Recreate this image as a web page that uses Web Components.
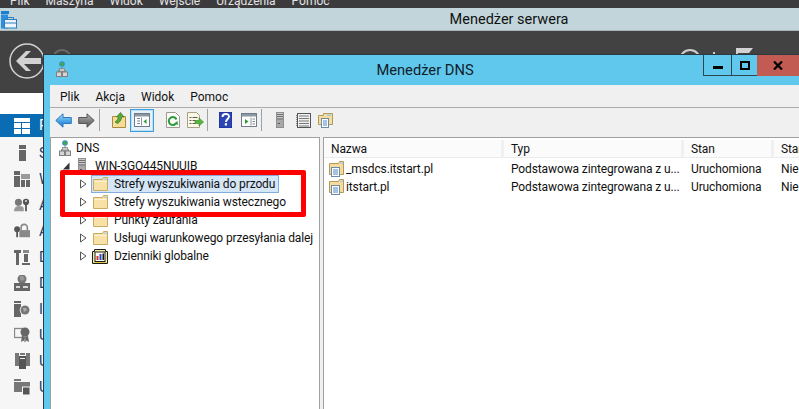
<!DOCTYPE html>
<html lang="pl">
<head>
<meta charset="utf-8">
<title>Menedżer DNS</title>
<style>
html, body { margin: 0; height: 100%; overflow: hidden; background: #f6f6f6; }
body { font-family: Roboto, "Noto Sans", "Liberation Sans", sans-serif; }
</style>
</head>
<body>
<srv-desktop>
  <dns-window></dns-window>
</srv-desktop>

<script>
// rysunki ikon (16x16 chyba że podano inaczej)
const ICONS = {
    back: `<svg width="17" height="15" viewBox="0 0 17 15"><defs><linearGradient id="bk" x1="0" y1="0" x2="0" y2="1"><stop offset="0" stop-color="#a9dcf8"/><stop offset=".55" stop-color="#45a3e6"/><stop offset="1" stop-color="#1f74c4"/></linearGradient></defs><path d="M.8 7.500 8 .8v3.700h8.300v6H8v3.700z" fill="url(#bk)" stroke="#2a78c0"/></svg>`,
    forward: `<svg width="17" height="15" viewBox="0 0 17 15"><defs><linearGradient id="fw" x1="0" y1="0" x2="0" y2="1"><stop offset="0" stop-color="#b5b5b5"/><stop offset=".55" stop-color="#7d7d7d"/><stop offset="1" stop-color="#5a5a5a"/></linearGradient></defs><path d="M16.200 7.500 9 .8v3.700H.7v6H9v3.700z" fill="url(#fw)" stroke="#555"/></svg>`,
    folderUp: `<svg width="16" height="16" viewBox="0 0 16 16"><path d="M1.500 4.500h13v11h-13z" fill="#f6dc94" stroke="#a98a3e"/><path d="M2 14 9 7" stroke="#f9edc6" stroke-width="1"/><path d="M4 10c2-1 3-3 3.500-5L5.500 5 9.500.5 13 5l-2.500 0c0 3-1.500 5-4 6.500z" fill="#5ba83a" stroke="#2f7a22" stroke-width=".7"/></svg>`,
    treePane: `<svg width="16" height="14" viewBox="0 0 16 14"><rect x=".5" y=".5" width="15" height="13" fill="#fff" stroke="#6f7b88"/><rect x="1" y="1" width="14" height="2.500" fill="#8c97a3"/><path d="M3 5h3v1H3zM3 7.500h3v1H3zM3 10h3v1H3z" fill="#7b8794"/><path d="M7.500 4.500v8" stroke="#8c97a3"/><path d="M12.500 6v5l-3-2.500z" fill="#2f9a3a"/></svg>`,
    refresh: `<svg width="14" height="16" viewBox="0 0 14 16"><path d="M.5.500h9l4 4v11H.5z" fill="#fbfbf8" stroke="#9a9a92"/><path d="M10.500 7.500a4 4 0 1 0-.8 4.300" fill="none" stroke="#2e9c3c" stroke-width="2"/><path d="M8 11.500l3.500-2.500.5 4z" fill="#2e9c3c"/></svg>`,
    exportList: `<svg width="17" height="16" viewBox="0 0 17 16"><path d="M.5.500h9l3 3v12H.5z" fill="#fcf8e6" stroke="#a8a184"/><path d="M2.500 5h2v1h-2zM5.500 5h5v1h-5zM2.500 8h2v1h-2zM5.500 8h3v1h-3zM2.500 11h2v1h-2zM5.500 11h3v1h-3z" fill="#5c5c5c"/><path d="M8 8.500h4V6l4.500 4-4.500 4v-2.500H8z" fill="#58b53c" stroke="#338a23" stroke-width=".6"/></svg>`,
    help: `<svg width="13" height="16" viewBox="0 0 13 16"><rect width="13" height="16" fill="#2b45b4"/><rect x="0" y="0" width="13" height="16" fill="none" stroke="#1b2c88"/><path d="M3.500 5c0-4 6.500-4 6.500-.5 0 2.500-3 2.500-3 5.500" fill="none" stroke="#fff" stroke-width="1.900"/><rect x="5.800" y="11.200" width="2.200" height="2.300" fill="#fff"/></svg>`,
    consolePane: `<svg width="16" height="14" viewBox="0 0 16 14"><rect x=".5" y=".5" width="15" height="13" fill="#fff" stroke="#6f7b88"/><rect x="1" y="1" width="14" height="2.500" fill="#8c97a3"/><path d="M10 4.500v8" stroke="#8c97a3"/><path d="M11.500 5.500h2.500v1h-2.500zM11.500 8h2.500v1h-2.500zM11.500 10.500h2.500v1h-2.500z" fill="#7b8794"/><path d="M4 6v5l3.500-2.500z" fill="#2f9a3a"/></svg>`,
    server: `<svg width="8" height="16" viewBox="0 0 8 16"><rect width="8" height="16" fill="#8f8f8f"/><rect x="1" y="1" width="6" height="5" fill="#c8c8c8"/><path d="M1 2.500h6M1 4.500h6" stroke="#707070"/><rect x="1" y="8" width="6" height="7" fill="#a9a9a9"/><rect x="2" y="11" width="2" height="1" fill="#555"/></svg>`,
    notes: `<svg width="15" height="15" viewBox="0 0 15 15"><rect x="1.500" y=".5" width="13" height="14" fill="#f1f1f1" stroke="#555"/><path d="M3 3h10M3 5.500h10M3 8h10M3 10.500h10M3 13h10" stroke="#777"/><path d="M.5 2v11" stroke="#888" stroke-dasharray="1 1"/></svg>`,
    folderDoc: `<svg width="15" height="16" viewBox="0 0 15 16"><path d="M.5 3.500h5V1.500h9v11H.5z" fill="#f6dd9c" stroke="#b19a5e"/><rect x="9" y="2.500" width="4" height="1.500" fill="#9ccbe9"/><rect x="3.500" y="6.500" width="7" height="9" fill="#fbfdff" stroke="#6d8aa8"/><path d="M5 9h4M5 11h4M5 13h4" stroke="#4e88c4"/></svg>`,
    dns: `<svg width="12" height="16" viewBox="0 0 12 16"><circle cx="6" cy="3" r="2.800" fill="#2f8fd0"/><path d="M4 1.500h3l1 2-2 2-1.500-1.500z" fill="#45ab3f"/><path d="M6 6v3M2.500 11V9.500h7V11" stroke="#7d7d7d" fill="none"/><rect x="3.500" y="7.500" width="5" height="3" fill="#c9c9c9" stroke="#808080" stroke-width=".7"/><rect x=".5" y="11" width="5" height="4.500" fill="#d6d6d6" stroke="#808080"/><rect x="6.500" y="11" width="5" height="4.500" fill="#d6d6d6" stroke="#808080"/></svg>`,
    folder: `<svg width="15" height="14" viewBox="0 0 15 14"><path d="M.5 2.500h9l1-2h4v13H.5z" fill="#f7e1a6" stroke="#c9ab62"/><path d="M11 1.500h3V3h-3z" fill="#a9d3ec"/><path d="M1.500 4.500h12" stroke="#fcf3d6"/></svg>`,
    logs: `<svg width="16" height="15" viewBox="0 0 16 15"><path d="M.5 2.500h2V.5h11v2h2v12H.5z" fill="#f2eda0" stroke="#1c1c1c"/><rect x="3" y="3" width="10" height="9.500" fill="#fff" stroke="#1c1c1c"/><rect x="4.500" y="7" width="2" height="4" fill="#e0342c"/><rect x="7.500" y="5" width="2" height="6" fill="#2c4fc8"/><rect x="10.500" y="4.500" width="1.500" height="6.500" fill="#1b1b1b"/><path d="M1.500 13.500h13" stroke="#e0c93a"/></svg>`,
    zone: `<svg width="15" height="16" viewBox="0 0 15 16"><path d="M.5 2.500h9l1-2h4v13H.5z" fill="#f5dc9e" stroke="#b7985a"/><path d="M11 1.500h3V3h-3z" fill="#a9d3ec"/><rect x="2.500" y="6.500" width="8" height="9" fill="#fbfdff" stroke="#6d8aa8"/><path d="M4 9h5M4 11h5M4 13h5" stroke="#4e88c4"/></svg>`,
    appBox: `<svg width="16" height="18" viewBox="0 0 16 18"><rect x="0" y="0" width="8" height="3" fill="#1a7fd0"/><rect x="0" y="3.500" width="7" height="14" fill="#2d8fdc"/><rect x="3.500" y="8.500" width="12" height="8.500" fill="#eef6fb" stroke="#2a7cc0"/><path d="M6.500 8.500V6.500h6v2" fill="none" stroke="#2a7cc0"/><path d="M4 12h11" stroke="#2a7cc0"/></svg>`,
    dash: `<svg width="16" height="16" viewBox="0 0 16 16" fill="#fff"><rect width="16" height="4"/><rect y="5" width="7" height="5"/><rect x="8" y="5" width="8" height="5"/><rect y="11" width="7" height="5"/><rect x="8" y="11" width="8" height="5"/></svg>`,
    sLocal: `<svg width="16" height="16" viewBox="0 0 16 16" fill="#666"><rect x="5" y="0" width="7" height="4"/><rect x="5" y="5" width="7" height="11"/></svg>`,
    sAll: `<svg width="16" height="16" viewBox="0 0 16 16" fill="#666"><rect x="0" y="0" width="6" height="4"/><rect x="0" y="5" width="6" height="11"/><rect x="7" y="3" width="9" height="5" fill="#999"/><rect x="7" y="9" width="4" height="7"/><rect x="12" y="9" width="4" height="7"/></svg>`,
    sCert: `<svg width="18" height="16" viewBox="0 0 18 16" fill="#777"><circle cx="5" cy="5" r="4"/><path d="M0 15c0-5 3-6 6-6s5 1 5 3v3z" fill="#999"/><circle cx="13.500" cy="4.500" r="3.500" fill="#555"/><circle cx="13.500" cy="3.500" r="1" fill="#f6f6f6"/><rect x="12.500" y="7" width="2" height="8" fill="#555"/></svg>`,
    sLock: `<svg width="18" height="16" viewBox="0 0 18 16"><circle cx="3.500" cy="6" r="3.300" fill="#555"/><rect x="2.500" y="8" width="2" height="7" fill="#555"/><path d="M8 7V4a3.500 3.500 0 0 1 7 0v3" fill="none" stroke="#888" stroke-width="1.800"/><rect x="6" y="7" width="12" height="8" fill="#888"/></svg>`,
    sTools: `<svg width="16" height="16" viewBox="0 0 16 16" fill="#666"><path d="M0 1h7v3H5v12H2V4H0z"/><rect x="9" y="1" width="6" height="3" fill="#888"/><rect x="10" y="5" width="4" height="8"/><rect x="8" y="14" width="8" height="2"/></svg>`,
    sGlobeNet: `<svg width="16" height="16" viewBox="0 0 16 16" fill="#666"><circle cx="8" cy="4" r="4.500" fill="#777"/><path d="M6 1h3l2 3-3 2-2-2z" fill="#999"/><rect y="8" width="16" height="8"/><path d="M2 12h4M9 12h5" stroke="#d8d8d8" stroke-width="2"/></svg>`,
    sPcGlobe: `<svg width="16" height="16" viewBox="0 0 16 16" fill="#666"><rect width="7" height="2"/><rect y="3" width="7" height="13"/><circle cx="11" cy="9" r="5.300" fill="#f6f6f6"/><circle cx="11" cy="9" r="4.500" fill="#777"/><path d="M9 7h3l1 2-3 2z" fill="#aaa"/></svg>`,
    sAward: `<svg width="16" height="16" viewBox="0 0 16 16" fill="#666"><rect x=".5" y="1.500" width="8" height="9" fill="#f6f6f6" stroke="#888" stroke-width="1.300"/><circle cx="11" cy="5" r="4.500"/><path d="M8 9l-1 6 2.500-1.500 1 2 .5-6zM14 9l1 6-2.500-1.500-1 2-.5-6z"/></svg>`,
    sTower: `<svg width="15" height="16" viewBox="0 0 15 16" fill="#777"><rect width="4" height="13"/><rect x="11" width="4" height="13"/><rect x="5" y="0" width="5" height="2"/><rect x="4" y="3" width="7" height="13" fill="#555"/><rect x="5" y="5" width="5" height="1" fill="#eee"/></svg>`,
    sFiles: `<svg width="16" height="16" viewBox="0 0 16 16" fill="#777"><rect width="7" height="2"/><rect y="3" width="11" height="10"/><rect x="10" y="3" width="6" height="7"/><rect x="8.500" y="8" width="7.500" height="8" fill="#555" stroke="#f6f6f6"/></svg>`
};

// pasek menu maszyny wirtualnej + pasek tytułu + ciemny pasek nawigacji
customElements.define('srv-desktop', class extends HTMLElement {
    constructor() {
        super();
        this.attachShadow({ mode: 'open' });
        this.render();
    }
    render() {
        this.shadowRoot.innerHTML = `
        <style>
        :host { display: flex; flex-direction: column; width: 799px; height: 409px; position: relative; overflow: hidden; }
        .vm { height: 8px; background: #3b3b3d; display: flex; align-items: flex-end; padding-left: 10px; gap: 16px; overflow: hidden; flex: none; }
        .vm span { color: #e4e4e4; font-size: 12px; line-height: 18px; flex: none; margin-bottom: -2px; }
        .caption { height: 23px; box-sizing: border-box; background: #c1d5db; color: #111; display: flex; align-items: center; justify-content: center; font-size: 14.500px; border-bottom: 1px solid #a9b4b8; position: relative; padding-left: 219px; flex: none; }
        .caption svg { position: absolute; left: 1px; top: 3px; }
        .nav { height: 62px; background: #424242; position: relative; flex: none; overflow: hidden; }
        .back { position: absolute; left: 9px; top: 11px; }
        .next { position: absolute; left: 52px; top: 18px; width: 16px; height: 16px; border: 2px solid #6a6a6a; border-radius: 50%; }
        .refresh { position: absolute; left: 679px; top: 18px; width: 18px; height: 18px; border: 2px solid #cfcfcf; border-radius: 50%; }
        .dot { position: absolute; left: 713px; top: 21px; width: 2px; height: 2px; background: #cfcfcf; }
        .flag { position: absolute; left: 736px; top: 17px; }
        .gap { height: 21px; background: #fff; flex: none; }
        </style>
        <div class="vm"><span>Plik</span><span>Maszyna</span><span>Widok</span><span>Wejście</span><span>Urządzenia</span><span>Pomoc</span></div>
        <div class="caption">${ICONS.appBox}Menedżer serwera</div>
        <div class="nav">
            <svg class="back" width="38" height="38" viewBox="0 0 38 38"><circle cx="18" cy="19" r="17" fill="none" stroke="#d2d2d2" stroke-width="1.500"/><path d="M7 19 17 9h5l-7 7h17v6H15l7 7h-5z" fill="#d2d2d2"/></svg>
            <div class="next"></div><div class="refresh"></div><div class="dot"></div>
            <svg class="flag" width="18" height="10" viewBox="0 0 18 10"><path d="M0 0h2v10H0zM2 0h15l-4 5H2z" fill="#d2d2d2"/></svg>
        </div>
        <div class="gap"></div>
        <srv-sidebar></srv-sidebar>
        <slot></slot>`;
    }
});

// lewa kolumna Menedżera serwera, przykryta oknem DNS
customElements.define('srv-sidebar', class extends HTMLElement {
    constructor() {
        super();
        this.attachShadow({ mode: 'open' });
        const rows = [
            ['sLocal', 'Serwer lokalny'], ['sAll', 'Wszystkie serwery'], ['sCert', 'AD CS'],
            ['sLock', 'AD DS'], ['sTools', 'DHCP'], ['sGlobeNet', 'DNS'], ['sPcGlobe', 'IIS'],
            ['sAward', 'Usługi certyfikatów'], ['sTower', 'Usługi pulpitu'], ['sFiles', 'Usługi plików']
        ];
        this.shadowRoot.innerHTML = `
        <style>
        :host { display: block; flex: 1; width: 43px; overflow: hidden; background: #f6f6f6; font-size: 14.500px; color: #1f3f66; }
        .row { display: flex; align-items: center; height: 26px; padding-left: 14px; gap: 9px; white-space: nowrap; }
        .ic { width: 16px; display: flex; justify-content: center; flex: none; }
        .active { height: 23px; background: #0a6db4; color: #fff; margin-bottom: 3px; }
        </style>
        <div class="row active"><span class="ic">${ICONS.dash}</span><span>Pulpit nawigacyjny</span></div>
        ${rows.map(([ic, label]) => `<div class="row"><span class="ic">${ICONS[ic]}</span><span>${label}</span></div>`).join('')}`;
    }
});

customElements.define('dns-window', class extends HTMLElement {
    constructor() {
        super();
        this.attachShadow({ mode: 'open' });
        this.shadowRoot.innerHTML = `
        <style>
        :host { position: absolute; left: 43px; top: 54px; right: 0; bottom: 0; display: flex; flex-direction: column; background: #60c8ec; border: 1px solid #2b3a42; border-width: 1px 0 0 1px; font-size: 12px; letter-spacing: -.12px; color: #111; }
        .title { height: 30px; display: flex; align-items: center; justify-content: center; font-size: 14.700px; letter-spacing: 0; position: relative; flex: none; padding-left: 7px; color: #10202a; }
        .title > svg { position: absolute; left: 12px; top: 6px; }
        .btns { position: absolute; right: 0; top: 0; display: flex; height: 21px; }
        .btns div { display: flex; align-items: center; justify-content: center; box-sizing: border-box; border: 1px solid #2d4651; border-width: 0 0 1px 1px; }
        .min { width: 28px; } .max { width: 26px; }
        .close { width: 42px; background: #c25b52; border: 0 !important; }
        .body { flex: 1; margin-left: 6px; background: #f0f0f0; display: flex; flex-direction: column; min-height: 0; }
        .panes { flex: 1; display: flex; gap: 3px; min-height: 0; }
        </style>
        <div class="title">
            ${ICONS.dns}<span>Menedżer DNS</span>
            <div class="btns">
                <div class="min"><svg width="10" height="10" viewBox="0 0 10 10"><rect y="6" width="10" height="3" fill="#000"/></svg></div>
                <div class="max"><svg width="10" height="9" viewBox="0 0 10 9"><rect x="1" y="1" width="8" height="7" fill="none" stroke="#000" stroke-width="2"/></svg></div>
                <div class="close"><svg width="10" height="9" viewBox="0 0 10 9"><path d="M1 .5 9 8.500M9 .5 1 8.500" stroke="#000" stroke-width="2.200"/></svg></div>
            </div>
        </div>
        <div class="body">
            <dns-menu></dns-menu>
            <dns-toolbar></dns-toolbar>
            <div class="panes"><dns-tree></dns-tree><dns-list></dns-list></div>
        </div>`;
    }
});

customElements.define('dns-menu', class extends HTMLElement {
    constructor() {
        super();
        this.attachShadow({ mode: 'open' });
        this.shadowRoot.innerHTML = `
        <style>
        :host { display: flex; height: 21px; padding-top: 1px; align-items: center; padding-left: 10px; gap: 16px; border-bottom: 1px solid #ababab; flex: none; letter-spacing: 0; }
        </style>
        <span>Plik</span><span>Akcja</span><span>Widok</span><span>Pomoc</span>`;
    }
});

customElements.define('dns-toolbar', class extends HTMLElement {
    constructor() {
        super();
        this.attachShadow({ mode: 'open' });
        // [ikona, margines z lewej]
        const items = [
            ['back', 5], ['forward', 6], ['|', 4], ['folderUp', 11], ['*treePane', 3], ['refresh', 12],
            ['exportList', 7], ['|', 3], ['help', 11], ['consolePane', 9], ['|', 4], ['server', 14],
            ['notes', 12], ['folderDoc', 7]
        ];
        const html = items.map(([name, ml]) => {
            if (name === '|') return `<i class="sep" style="margin-left:${ml}px"></i>`;
            if (name[0] === '*') return `<b class="on" style="margin-left:${ml}px">${ICONS[name.slice(1)]}</b>`;
            return `<b style="margin-left:${ml}px">${ICONS[name]}</b>`;
        }).join('');
        this.shadowRoot.innerHTML = `
        <style>
        :host { display: flex; height: 29px; padding-bottom: 5px; align-items: center; flex: none; box-sizing: border-box; }
        b { display: flex; align-items: center; justify-content: center; font-weight: normal; }
        .on { width: 22px; height: 21px; border: 1px solid #3a9ddc; background: #e6f2fa; box-shadow: inset 0 0 0 1px #bfe0f5; }
        .sep { width: 1px; height: 22px; background: #a0a0a0; }
        </style>
        ${html}`;
    }
});

customElements.define('dns-tree', class extends HTMLElement {
    constructor() {
        super();
        this.attachShadow({ mode: 'open' });
        this.shadowRoot.innerHTML = `
        <style>
        :host { display: block; width: 270px; flex: none; background: #fff; border: 1px solid #a0a0a0; border-bottom: 0; box-sizing: border-box; position: relative; padding-top: 1px; overflow: hidden; }
        .mark { position: absolute; left: 9px; top: 32px; width: 236px; height: 37px; border: 5px solid #f00; border-radius: 2px; }
        </style>
        <tree-row level="0" icon="dns" text="DNS"></tree-row>
        <tree-row level="1" icon="server" twist="open" text="WIN-3GO445NUUIB"></tree-row>
        <tree-row level="2" icon="folder" twist="closed" selected text="Strefy wyszukiwania do przodu"></tree-row>
        <tree-row level="2" icon="folder" twist="closed" text="Strefy wyszukiwania wstecznego"></tree-row>
        <tree-row level="2" icon="folder" twist="closed" text="Punkty zaufania"></tree-row>
        <tree-row level="2" icon="folder" twist="closed" text="Usługi warunkowego przesyłania dalej"></tree-row>
        <tree-row level="2" icon="logs" twist="closed" text="Dzienniki globalne"></tree-row>
        <div class="mark"></div>`;
    }
});

customElements.define('tree-row', class extends HTMLElement {
    constructor() {
        super();
        this.attachShadow({ mode: 'open' });
    }
    connectedCallback() {
        const level = +this.getAttribute('level');
        const twist = this.getAttribute('twist');
        const sel = this.hasAttribute('selected');
        // wcięcia odczytane z obrazka: [lewy, strzałka, przed tekstem]
        const [pad, tw, gap] = [[6, 0, 1], [12, 11, 3], [29, 12, 4]][level];
        let arrow = '';
        if (twist === 'closed') arrow = `<svg width="7" height="10" viewBox="0 0 7 10"><path d="M.5 1 6 5 .5 9z" fill="#fff" stroke="#555"/></svg>`;
        if (twist === 'open') arrow = `<svg width="7" height="10" viewBox="0 0 7 10"><path d="M6.500 1.500v7H0z" fill="#333"/></svg>`;
        this.shadowRoot.innerHTML = `
        <style>
        :host { display: flex; height: 18px; align-items: center; white-space: nowrap; padding-left: ${pad}px; }
        .tw { width: ${tw}px; flex: none; display: flex; }
        .ic { width: 16px; display: flex; justify-content: center; flex: none; }
        .txt { margin-left: ${gap}px; line-height: 15px; padding: 0 3px 0 2px; }
        .lab { display: flex; align-items: center; height: 18px; box-sizing: border-box; }
        .sel { background: #d5e6f7; border: 1px solid #85abd8; margin-left: -1px; }
        </style>
        <span class="tw">${arrow}</span>
        <span class="lab ${sel ? 'sel' : ''}"><span class="ic">${ICONS[this.getAttribute('icon')]}</span><span class="txt">${this.getAttribute('text')}</span></span>`;
    }
});

customElements.define('dns-list', class extends HTMLElement {
    constructor() {
        super();
        this.attachShadow({ mode: 'open' });
        const rows = [['_msdcs.itstart.pl'], ['itstart.pl']];
        this.shadowRoot.innerHTML = `
        <style>
        :host { display: block; flex: 1; min-width: 0; background: #fff; border: 1px solid #a0a0a0; border-width: 1px 0 0 1px; overflow: hidden; }
        .grid { display: grid; grid-template-columns: 180px 180px 90px 60px; width: 510px; }
        .h { height: 18px; margin-top: 2px; background: #fbfbfb; display: flex; align-items: center; padding-left: 7px; border-right: 3px solid #f0f0f0; border-bottom: 1px solid #ececec; white-space: nowrap; overflow: hidden; box-sizing: border-box; }
        .c { height: 18px; display: flex; align-items: center; padding-left: 7px; white-space: nowrap; overflow: hidden; box-sizing: border-box; }
        .first { padding-left: 5px; gap: 2px; }
        .spacer { grid-column: 1 / -1; height: 2px; }
        </style>
        <div class="grid">
            <div class="h">Nazwa</div><div class="h">Typ</div><div class="h">Stan</div><div class="h">Stan</div>
            <div class="spacer"></div>
            ${rows.map(([name]) => `
            <div class="c first">${ICONS.zone}<span>${name}</span></div>
            <div class="c">Podstawowa zintegrowana z u...</div>
            <div class="c">Uruchomiona</div>
            <div class="c">Nie</div>`).join('')}
        </div>`;
    }
});
</script>
</body>
</html>
